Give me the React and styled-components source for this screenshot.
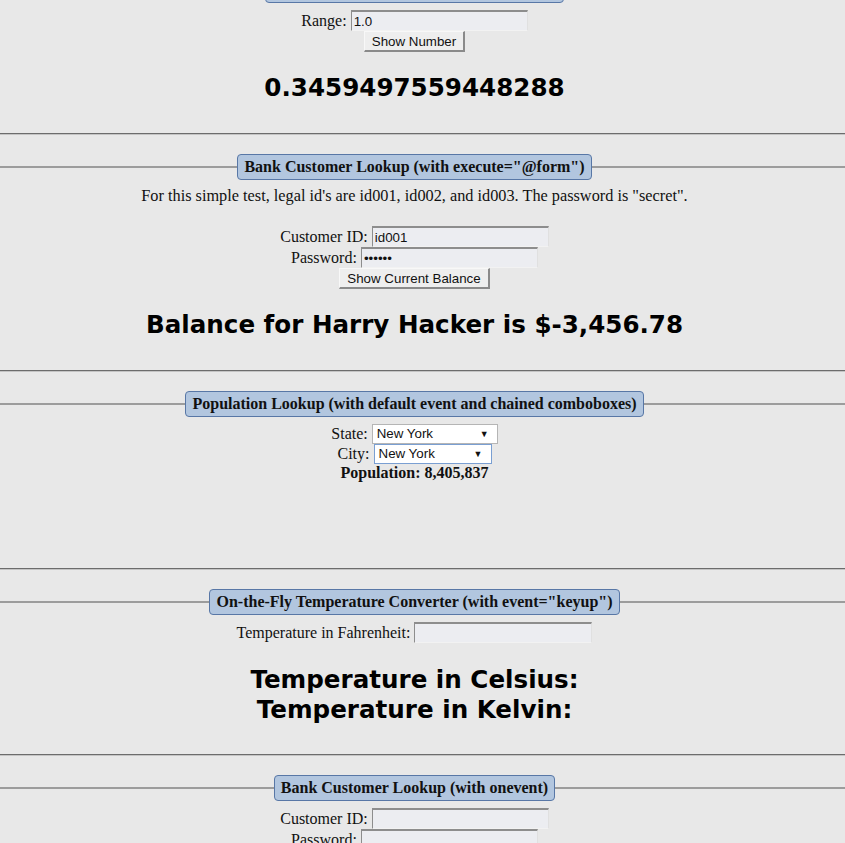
import React from "react";
import styled, { createGlobalStyle } from "styled-components";

const GlobalStyle = createGlobalStyle`
  html, body {
    margin: 0;
    padding: 0;
    background: #e8e8e8;
    overflow: hidden;
  }
  body {
    font-family: "Liberation Serif", "Times New Roman", serif;
    font-size: 16px;
    color: #111;
  }
`;

const Page = styled.div`
  margin-top: -23px;
`;

const Rule = styled.hr`
  margin: 0 0 19px;
  height: 0;
  border: none;
  border-top: 1px solid #6c6c6c;
  border-bottom: 1px solid #c4c4c4;
`;

const Panel = styled.fieldset`
  margin: 0;
  min-width: 0;
  padding: 7px 16px ${(p) => p.$bottom}px 0;
  border: none;
  border-top: 2px solid #9c9c9c;
  text-align: center;
`;

const Legend = styled.legend`
  margin: 0 auto;
  padding: 3px 6px;
  background: #b2c6df;
  border: 1px solid #5877a6;
  border-radius: 4px;
  font-weight: bold;
  line-height: 18px;
  color: #111;
`;

const Note = styled.p`
  margin: 0 0 21px;
  line-height: 18px;
  font-size: 16.3px;
`;

const Row = styled.div`
  height: ${(p) => p.$h || 21}px;
  line-height: ${(p) => p.$h || 21}px;
  display: flex;
  justify-content: center;
  align-items: center;
  gap: 4px;
`;

const TextInput = styled.input`
  box-sizing: border-box;
  width: ${(p) => p.$w || 177}px;
  height: 21px;
  margin: 0;
  padding: 1px 2px;
  background: #ecedf1;
  border: 1px solid;
  border-color: #8d8d8d #e0e0e0 #f2f2f2 #8d8d8d;
  border-top-width: 2px;
  font-family: "Liberation Sans", Arial, sans-serif;
  font-size: 13.33px;
  color: #111;
  outline: none;
`;

const Button = styled.button`
  box-sizing: border-box;
  height: 21px;
  margin: 0;
  padding: 0 7px;
  background: #eeeeee;
  border: 1px solid;
  border-color: #f8f8f8 #8a8a8a #8a8a8a #f8f8f8;
  border-width: 1px 2px 2px 1px;
  font-family: "Liberation Sans", Arial, sans-serif;
  font-size: 13.33px;
  color: #111;
  cursor: pointer;
`;

const Result = styled.h2`
  margin: ${(p) => p.$top || 22}px 0 0;
  font-family: "DejaVu Sans", Verdana, sans-serif;
  font-size: 24.6px;
  font-weight: bold;
  line-height: ${(p) => p.$lh || 28}px;
  color: #000;
`;

const Select = styled.div`
  box-sizing: border-box;
  width: ${(p) => p.$w}px;
  height: 20px;
  display: inline-flex;
  align-items: center;
  justify-content: space-between;
  padding: 0 8px 0 4px;
  background: #fff;
  border: 1px solid ${(p) => (p.$focus ? "#7a9fd2" : "#b5b5b5")};
  font-family: "Liberation Sans", Arial, sans-serif;
  font-size: 13.33px;
  color: #111;
  line-height: 18px;
  text-align: left;
`;

const Arrow = styled.span`
  font-size: 9px;
  line-height: 1;
`;

const Stat = styled.div`
  font-weight: bold;
  line-height: 17px;
`;

function Section({ title, bottom, children }) {
  return (
    <Panel $bottom={bottom}>
      <Legend>{title}</Legend>
      {children}
    </Panel>
  );
}

function Combo({ value, width, focus }) {
  return (
    <Select role="combobox" $w={width} $focus={focus}>
      <span>{value}</span>
      <Arrow>▼</Arrow>
    </Select>
  );
}

export default function App() {
  return (
    <Page>
      <GlobalStyle />
      <Section title={'Random Number (with execute="@this")'} bottom={31}>
        <Row $h={21}>
          <span>Range:</span>
          <TextInput defaultValue="1.0" />
        </Row>
        <Row>
          <Button>Show Number</Button>
        </Row>
        <Result>0.3459497559448288</Result>
      </Section>

      <Rule />
      <Section title={'Bank Customer Lookup (with execute="@form")'} bottom={31}>
        <Note>
          For this simple test, legal id's are id001, id002, and id003. The password is "secret".
        </Note>
        <Row>
          <span>Customer ID:</span>
          <TextInput defaultValue="id001" />
        </Row>
        <Row>
          <span>Password:</span>
          <TextInput type="password" defaultValue="secret" />
        </Row>
        <Row>
          <Button>Show Current Balance</Button>
        </Row>
        <Result>Balance for Harry Hacker is $-3,456.78</Result>
      </Section>

      <Rule />
      <Section title="Population Lookup (with default event and chained comboboxes)" bottom={87}>
        <Row $h={20}>
          <span>State:</span>
          <Combo value="New York" width={126} />
        </Row>
        <Row $h={20}>
          <span>City:</span>
          <Combo value="New York" width={118} focus />
        </Row>
        <Stat>Population: 8,405,837</Stat>
      </Section>

      <Rule />
      <Section title={'On-the-Fly Temperature Converter (with event="keyup")'} bottom={29}>
        <Row>
          <span>Temperature in Fahrenheit:</span>
          <TextInput $w={178} />
        </Row>
        <Result $lh={30}>
          Temperature in Celsius:
          <br />
          Temperature in Kelvin:
        </Result>
      </Section>

      <Rule />
      <Section title="Bank Customer Lookup (with onevent)" bottom={30}>
        <Row>
          <span>Customer ID:</span>
          <TextInput />
        </Row>
        <Row>
          <span>Password:</span>
          <TextInput type="password" />
        </Row>
        <Row>
          <Button>Show Current Balance</Button>
        </Row>
      </Section>
    </Page>
  );
}
